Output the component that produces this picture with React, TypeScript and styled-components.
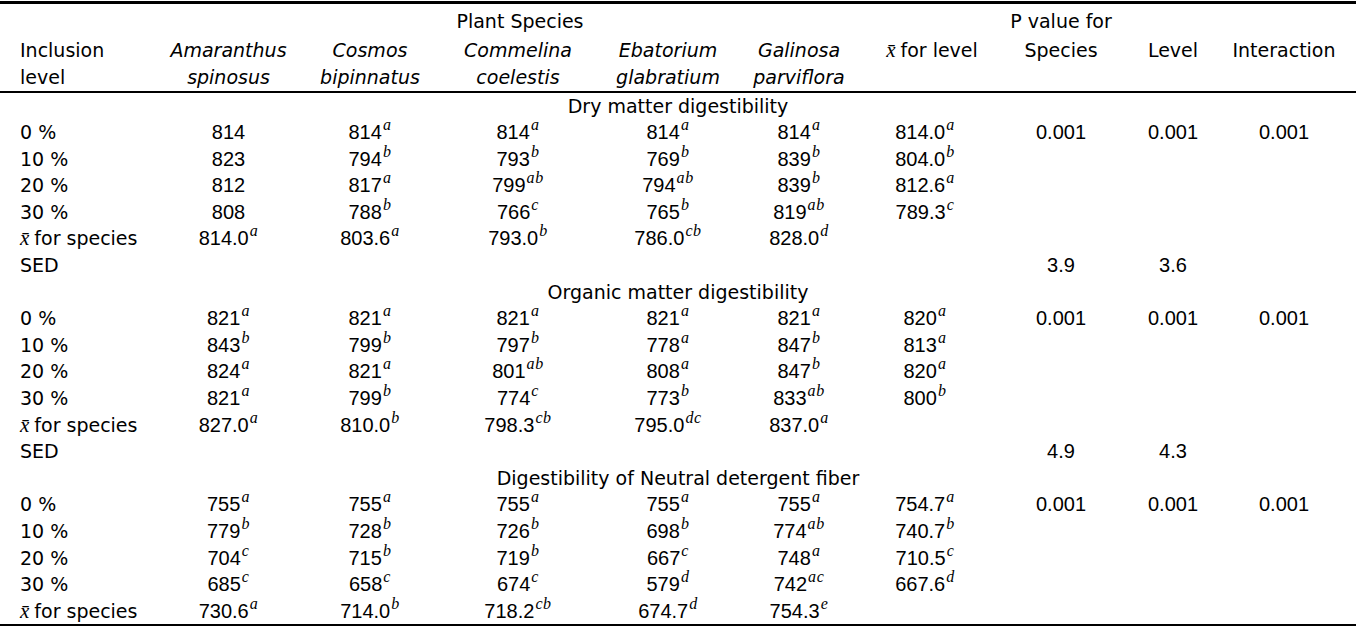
import React from "react";
import styled, { createGlobalStyle } from "styled-components";

const GlobalStyle = createGlobalStyle`
  html, body { margin: 0; padding: 0; background: #ffffff; }
  body {
    font-family: "DejaVu Sans", "Liberation Sans", sans-serif;
    font-size: 19px;
    color: #000000;
  }
`;

const COLS = "157px 143px 140px 156px 144px 118px 134px 138px 86px 136px";

const Table = styled.div`
  width: 1356px;
  display: flex;
  flex-direction: column;
  padding-top: 1px;
`;

const Rule = styled.div<{ $h: number }>`
  height: ${(p) => p.$h}px;
  background: #000000;
  width: 100%;
`;

const Head = styled.div`
  padding-top: 4px;
  display: flex;
  flex-direction: column;
`;

const HeadRow = styled.div<{ $h: number }>`
  display: grid;
  grid-template-columns: ${COLS};
  line-height: 27px;
  height: ${(p) => p.$h}px;
  align-items: start;
`;

const HeadCell = styled.div<{ $align?: "left" | "center"; $span?: number; $shift?: number }>`
  grid-column: span ${(p) => p.$span ?? 1};
  display: flex;
  flex-direction: column;
  align-items: ${(p) => (p.$align === "left" ? "flex-start" : "center")};
  padding-left: ${(p) => (p.$align === "left" ? 20 : 0) + (p.$shift ?? 0)}px;
  white-space: nowrap;
`;

const Species = styled.span`
  font-style: italic;
`;

const Body = styled.div`
  display: flex;
  flex-direction: column;
`;

const Row = styled.div`
  display: grid;
  grid-template-columns: ${COLS};
  height: 26.6px;
  line-height: 26.6px;
`;

const Cell = styled.div<{ $align?: "left" | "center" }>`
  display: flex;
  justify-content: ${(p) => (p.$align === "left" ? "flex-start" : "center")};
  padding-left: ${(p) => (p.$align === "left" ? 20 : 0)}px;
  white-space: nowrap;
`;

const Num = styled.span`
  font-family: "Liberation Sans", Arial, sans-serif;
  font-size: 20px;
`;

const SectionTitle = styled.div`
  height: 26.6px;
  line-height: 26.6px;
  text-align: center;
  white-space: nowrap;
`;

const Sup = styled.sup`
  font-family: "Liberation Serif", "Times New Roman", serif;
  font-style: italic;
  font-size: 16px;
  letter-spacing: 0.6px;
  line-height: 0;
  vertical-align: 0;
  position: relative;
  top: -9px;
  margin-left: 1px;
`;

const XBar = styled.span`
  font-family: "Liberation Serif", "Times New Roman", serif;
  font-style: italic;
  font-size: 21px;
  margin-right: 5px;
`;

type Val = string | [string, string] | null;

const V = ({ v }: { v: Val }) => {
  if (v === null) return null;
  if (typeof v === "string") return <Num>{v}</Num>;
  return (
    <Num>
      {v[0]}
      <Sup>{v[1]}</Sup>
    </Num>
  );
};

const Xbar = () => <XBar>x̄</XBar>;

type RowData = { label: React.ReactNode; vals: Val[] };

const p = (s: string): Val => {
  const m = s.match(/^([\d.]+)([a-e]*)$/);
  if (!m) return s;
  return m[2] ? [m[1], m[2]] : m[1];
};

const mk = (label: React.ReactNode, vals: string[]): RowData => ({
  label,
  vals: vals.map((s) => (s === "" ? null : p(s))),
});

const speciesLabel = (
  <>
    <Xbar />
    for species
  </>
);

const sections: { title: string; rows: RowData[] }[] = [
  {
    title: "Dry matter digestibility",
    rows: [
      mk("0 %", ["814", "814a", "814a", "814a", "814a", "814.0a", "0.001", "0.001", "0.001"]),
      mk("10 %", ["823", "794b", "793b", "769b", "839b", "804.0b", "", "", ""]),
      mk("20 %", ["812", "817a", "799ab", "794ab", "839b", "812.6a", "", "", ""]),
      mk("30 %", ["808", "788b", "766c", "765b", "819ab", "789.3c", "", "", ""]),
      mk(speciesLabel, ["814.0a", "803.6a", "793.0b", "786.0cb", "828.0d", "", "", "", ""]),
      mk("SED", ["", "", "", "", "", "", "3.9", "3.6", ""]),
    ],
  },
  {
    title: "Organic matter digestibility",
    rows: [
      mk("0 %", ["821a", "821a", "821a", "821a", "821a", "820a", "0.001", "0.001", "0.001"]),
      mk("10 %", ["843b", "799b", "797b", "778a", "847b", "813a", "", "", ""]),
      mk("20 %", ["824a", "821a", "801ab", "808a", "847b", "820a", "", "", ""]),
      mk("30 %", ["821a", "799b", "774c", "773b", "833ab", "800b", "", "", ""]),
      mk(speciesLabel, ["827.0a", "810.0b", "798.3cb", "795.0dc", "837.0a", "", "", "", ""]),
      mk("SED", ["", "", "", "", "", "", "4.9", "4.3", ""]),
    ],
  },
  {
    title: "Digestibility of Neutral detergent fiber",
    rows: [
      mk("0 %", ["755a", "755a", "755a", "755a", "755a", "754.7a", "0.001", "0.001", "0.001"]),
      mk("10 %", ["779b", "728b", "726b", "698b", "774ab", "740.7b", "", "", ""]),
      mk("20 %", ["704c", "715b", "719b", "667c", "748a", "710.5c", "", "", ""]),
      mk("30 %", ["685c", "658c", "674c", "579d", "742ac", "667.6d", "", "", ""]),
      mk(speciesLabel, ["730.6a", "714.0b", "718.2cb", "674.7d", "754.3e", "", "", "", ""]),
    ],
  },
];

const speciesNames: [string, string][] = [
  ["Amaranthus", "spinosus"],
  ["Cosmos", "bipinnatus"],
  ["Commelina", "coelestis"],
  ["Ebatorium", "glabratium"],
  ["Galinosa", "parviflora"],
];

export default function App() {
  return (
    <>
      <GlobalStyle />
      <Table>
        <Rule $h={3} />
        <Head>
          <HeadRow $h={28.5}>
            <HeadCell />
            <HeadCell $span={5} $shift={25}>Plant Species</HeadCell>
            <HeadCell />
            <HeadCell>P value for</HeadCell>
            <HeadCell />
            <HeadCell />
          </HeadRow>
          <HeadRow $h={54}>
            <HeadCell $align="left">
              <span>Inclusion</span>
              <span>level</span>
            </HeadCell>
            {speciesNames.map(([a, b]) => (
              <HeadCell key={a}>
                <Species>{a}</Species>
                <Species>{b}</Species>
              </HeadCell>
            ))}
            <HeadCell $shift={14}>
              <span>
                <Xbar />
                for level
              </span>
            </HeadCell>
            <HeadCell>Species</HeadCell>
            <HeadCell>Level</HeadCell>
            <HeadCell>Interaction</HeadCell>
          </HeadRow>
        </Head>
        <Rule $h={2} />
        <Body>
          {sections.map((s) => (
            <React.Fragment key={s.title}>
              <SectionTitle>{s.title}</SectionTitle>
              {s.rows.map((r, i) => (
                <Row key={i}>
                  <Cell $align="left">{r.label}</Cell>
                  {r.vals.map((v, j) => (
                    <Cell key={j}>
                      <V v={v} />
                    </Cell>
                  ))}
                </Row>
              ))}
            </React.Fragment>
          ))}
        </Body>
        <Rule $h={2} />
      </Table>
    </>
  );
}
